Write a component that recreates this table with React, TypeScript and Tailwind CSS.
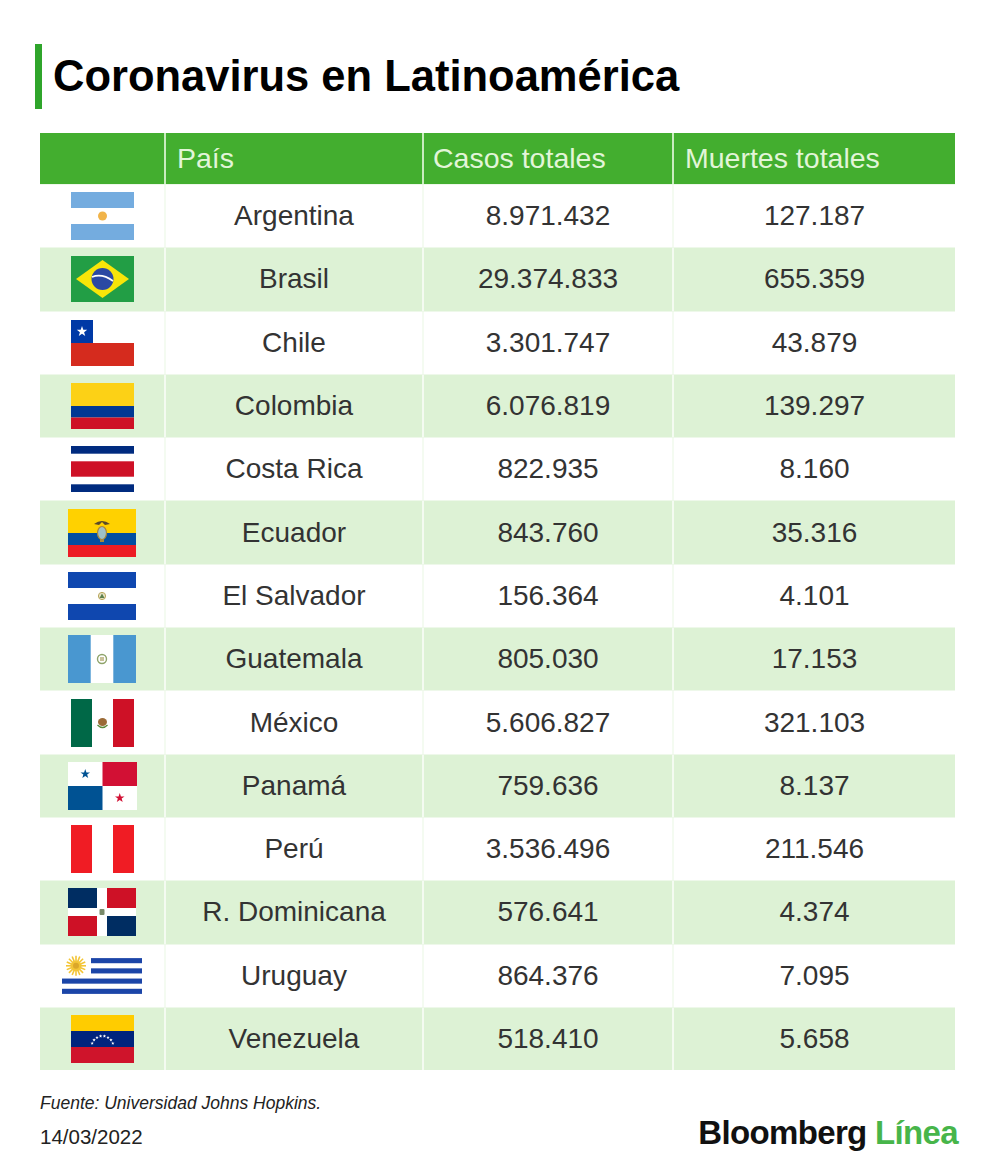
import React from 'react';

// star polygon points helper
const star = (cx: number, cy: number, r: number) => {
  const pts: string[] = [];
  for (let i = 0; i < 10; i++) {
    const rad = i % 2 === 0 ? r : r * 0.4;
    const a = (Math.PI / 5) * i - Math.PI / 2;
    pts.push(`${(cx + rad * Math.cos(a)).toFixed(2)},${(cy + rad * Math.sin(a)).toFixed(2)}`);
  }
  return pts.join(' ');
};

const Flag = ({ code }: { code: string }) => {
  switch (code) {
    case 'ar':
      return (
        <svg width="63" height="48" viewBox="0 0 63 48">
          <rect x="0" y="0" width="63" height="16" fill="#74acdf" />
          <rect x="0" y="16" width="63" height="16" fill="#fff" />
          <rect x="0" y="32" width="63" height="16" fill="#74acdf" />
          <circle cx="31.5" cy="24" r="4.5" fill="#f1b44a" />
        </svg>
      );
    case 'br':
      return (
        <svg width="63" height="46" viewBox="0 0 63 46">
          <rect width="63" height="46" fill="#229e45" />
          <polygon points="5,23 31.5,4 58,23 31.5,42" fill="#f8e509" />
          <circle cx="31.5" cy="23" r="11" fill="#2b49a3" />
          <path d="M21 21 Q31 17 42 25" stroke="#fff" strokeWidth="1.6" fill="none" />
        </svg>
      );
    case 'cl':
      return (
        <svg width="63" height="46" viewBox="0 0 63 46">
          <rect width="63" height="23" fill="#fff" />
          <rect width="22" height="23" fill="#0039a6" />
          <polygon points={star(11, 11.5, 5.5)} fill="#fff" />
          <rect y="23" width="63" height="23" fill="#d52b1e" />
        </svg>
      );
    case 'co':
      return (
        <svg width="63" height="46" viewBox="0 0 63 46">
          <rect width="63" height="23" fill="#fcd116" />
          <rect y="23" width="63" height="11.5" fill="#003893" />
          <rect y="34.5" width="63" height="11.5" fill="#ce1126" />
        </svg>
      );
    case 'cr':
      return (
        <svg width="63" height="46" viewBox="0 0 63 46">
          <rect width="63" height="46" fill="#fff" />
          <rect width="63" height="7.7" fill="#002b7f" />
          <rect y="15.3" width="63" height="15.4" fill="#ce1126" />
          <rect y="38.3" width="63" height="7.7" fill="#002b7f" />
        </svg>
      );
    case 'ec':
      return (
        <svg width="68" height="48" viewBox="0 0 68 48">
          <rect width="68" height="24" fill="#ffd100" />
          <rect y="24" width="68" height="12" fill="#034ea2" />
          <rect y="36" width="68" height="12" fill="#ed1c24" />
          <path d="M26 15 Q34 9 42 15 L37 16 L34 13 L31 16 Z" fill="#5a4a2a" />
          <ellipse cx="34" cy="24" rx="4.5" ry="6.5" fill="#9fc0c8" stroke="#a8863a" strokeWidth="1.2" />
          <rect x="32" y="30" width="4" height="3" fill="#a8863a" />
        </svg>
      );
    case 'sv':
      return (
        <svg width="68" height="48" viewBox="0 0 68 48">
          <rect width="68" height="48" fill="#fff" />
          <rect width="68" height="16" fill="#0f47af" />
          <rect y="32" width="68" height="16" fill="#0f47af" />
          <circle cx="34" cy="24" r="3.6" fill="#e9e4c8" stroke="#b8a65a" strokeWidth="1" />
          <polygon points="34,21.5 36.5,26 31.5,26" fill="#5b7f4a" />
        </svg>
      );
    case 'gt':
      return (
        <svg width="68" height="48" viewBox="0 0 68 48">
          <rect width="68" height="48" fill="#fff" />
          <rect width="22.7" height="48" fill="#4997d0" />
          <rect x="45.3" width="22.7" height="48" fill="#4997d0" />
          <circle cx="34" cy="24" r="4.5" fill="none" stroke="#8ea36a" strokeWidth="1.4" />
          <rect x="32" y="22" width="4" height="4" fill="#c9c19a" />
        </svg>
      );
    case 'mx':
      return (
        <svg width="63" height="48" viewBox="0 0 63 48">
          <rect width="63" height="48" fill="#fff" />
          <rect width="21" height="48" fill="#006847" />
          <rect x="42" width="21" height="48" fill="#ce1126" />
          <ellipse cx="31.5" cy="23" rx="4.5" ry="4" fill="#9b6a36" />
          <path d="M26.5 26 Q31.5 31 36.5 26" stroke="#5b8a3a" strokeWidth="1.4" fill="none" />
        </svg>
      );
    case 'pa':
      return (
        <svg width="69" height="48" viewBox="0 0 69 48">
          <rect width="69" height="48" fill="#fff" />
          <rect x="34.5" width="34.5" height="24" fill="#d21034" />
          <rect y="24" width="34.5" height="24" fill="#005293" />
          <polygon points={star(17.25, 12, 5)} fill="#005293" />
          <polygon points={star(51.75, 36, 5)} fill="#d21034" />
        </svg>
      );
    case 'pe':
      return (
        <svg width="63" height="48" viewBox="0 0 63 48">
          <rect width="63" height="48" fill="#fff" />
          <rect width="21" height="48" fill="#f01c24" />
          <rect x="42" width="21" height="48" fill="#f01c24" />
        </svg>
      );
    case 'do':
      return (
        <svg width="68" height="48" viewBox="0 0 68 48">
          <rect width="68" height="48" fill="#fff" />
          <rect width="29" height="20" fill="#002d62" />
          <rect x="39" width="29" height="20" fill="#ce1126" />
          <rect y="28" width="29" height="20" fill="#ce1126" />
          <rect x="39" y="28" width="29" height="20" fill="#002d62" />
          <rect x="31.5" y="21" width="5" height="6" rx="1" fill="#7a8a6a" />
        </svg>
      );
    case 'uy': {
      const h = 46 / 9;
      const rays = Array.from({ length: 16 }, (_, i) => {
        const a = (Math.PI * 2 * i) / 16;
        return (
          <line
            key={i}
            x1={14 + 5 * Math.cos(a)}
            y1={12.8 + 5 * Math.sin(a)}
            x2={14 + 10 * Math.cos(a)}
            y2={12.8 + 10 * Math.sin(a)}
            stroke="#f3c537"
            strokeWidth="1.6"
          />
        );
      });
      return (
        <svg width="80" height="46" viewBox="0 0 80 46">
          <rect width="80" height="46" fill="#fff" />
          {[1, 3, 5, 7].map((i) => (
            <rect key={i} x={i < 5 ? 29 : 0} y={i * h} width={i < 5 ? 51 : 80} height={h} fill="#1b45a8" />
          ))}
          {rays}
          <circle cx="14" cy="12.8" r="5.5" fill="#f3c537" />
          <circle cx="14" cy="12.8" r="3" fill="#dba72a" />
        </svg>
      );
    }
    case 've': {
      const stars = Array.from({ length: 8 }, (_, i) => {
        const a = ((160 - (140 / 7) * i) * Math.PI) / 180;
        return <polygon key={i} points={star(31.5 + 11 * Math.cos(a), 32 - 11 * Math.sin(a), 1.8)} fill="#fff" />;
      });
      return (
        <svg width="63" height="48" viewBox="0 0 63 48">
          <rect width="63" height="16" fill="#ffcc00" />
          <rect y="16" width="63" height="16" fill="#00247d" />
          <rect y="32" width="63" height="16" fill="#cf142b" />
          {stars}
        </svg>
      );
    }
    default:
      return null;
  }
};

const rows = [
  { code: 'ar', name: 'Argentina', cases: '8.971.432', deaths: '127.187' },
  { code: 'br', name: 'Brasil', cases: '29.374.833', deaths: '655.359' },
  { code: 'cl', name: 'Chile', cases: '3.301.747', deaths: '43.879' },
  { code: 'co', name: 'Colombia', cases: '6.076.819', deaths: '139.297' },
  { code: 'cr', name: 'Costa Rica', cases: '822.935', deaths: '8.160' },
  { code: 'ec', name: 'Ecuador', cases: '843.760', deaths: '35.316' },
  { code: 'sv', name: 'El Salvador', cases: '156.364', deaths: '4.101' },
  { code: 'gt', name: 'Guatemala', cases: '805.030', deaths: '17.153' },
  { code: 'mx', name: 'México', cases: '5.606.827', deaths: '321.103' },
  { code: 'pa', name: 'Panamá', cases: '759.636', deaths: '8.137' },
  { code: 'pe', name: 'Perú', cases: '3.536.496', deaths: '211.546' },
  { code: 'do', name: 'R. Dominicana', cases: '576.641', deaths: '4.374' },
  { code: 'uy', name: 'Uruguay', cases: '864.376', deaths: '7.095' },
  { code: 've', name: 'Venezuela', cases: '518.410', deaths: '5.658' },
];

export default function App() {
  return (
    <div className="w-[1000px] h-[1170px] bg-white pt-[44px] font-['Liberation_Sans',Arial,sans-serif]">
      <div className="flex items-center gap-[11px] pl-[35px]">
        <div className="w-[7px] h-[65px] bg-[#2fa52b]" />
        <h1 className="text-[43.5px] font-bold leading-none text-black">
          Coronavirus en Latinoamérica
        </h1>
      </div>

      <div className="ml-[40px] mt-[24px] w-[915px]">
        <div className="grid grid-cols-[124px_258px_250px_283px] h-[51px] bg-[#43ae2f] text-[#e2f5d8] text-[28.5px]">
          <div />
          <div className="flex items-center pl-[11px] border-l-2 border-[#c9ecbf]">País</div>
          <div className="flex items-center pl-[9px] border-l-2 border-[#c9ecbf]">Casos totales</div>
          <div className="flex items-center pl-[11px] border-l-2 border-[#c9ecbf]">Muertes totales</div>
        </div>

        {rows.map((r, i) => (
          <div
            key={r.code}
            className={`grid grid-cols-[124px_258px_250px_283px] h-[63.3px] text-[28px] text-[#333] border-t border-[#eef8ea] ${
              i % 2 === 1 ? 'bg-[#ddf2d5]' : 'bg-white'
            }`}
          >
            <div className="flex items-center justify-center">
              <Flag code={r.code} />
            </div>
            <div className="flex items-center justify-center border-l-2 border-[#f4fbf1]">{r.name}</div>
            <div className="flex items-center justify-center border-l-2 border-[#f4fbf1]">{r.cases}</div>
            <div className="flex items-center justify-center border-l-2 border-[#f4fbf1]">{r.deaths}</div>
          </div>
        ))}

        <div className="mt-[22px] flex justify-between items-end">
          <div>
            <p className="text-[17.5px] italic leading-[22px] text-[#222]">
              Fuente: Universidad Johns Hopkins.
            </p>
            <p className="mt-[11px] text-[20.5px] leading-[24px] text-[#222]">14/03/2022</p>
          </div>
          <div className="text-[33px] font-bold leading-[36px] tracking-[-0.02em] mr-[-3px] mb-[-2px]">
            <span className="text-[#111]">Bloomberg</span> <span className="text-[#47b54a]">Línea</span>
          </div>
        </div>
      </div>
    </div>
  );
}
